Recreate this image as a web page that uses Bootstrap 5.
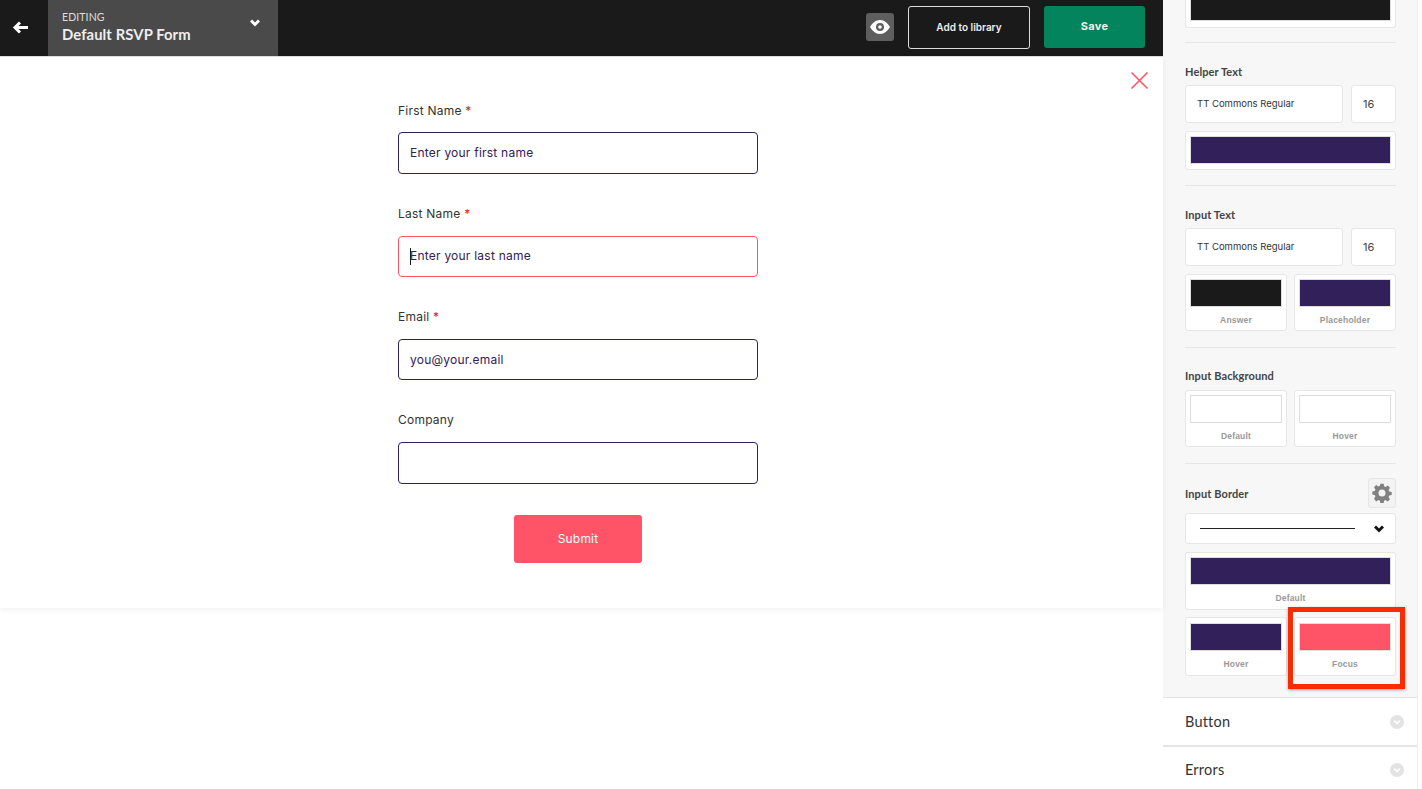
<!DOCTYPE html>
<html lang="en"><head><meta charset="utf-8"><title>Default RSVP Form</title>
<link href="https://cdn.jsdelivr.net/npm/bootstrap@5.3.0/dist/css/bootstrap.min.css" rel="stylesheet">
<style>
html,body{height:789px;overflow:hidden;background:#fff}
body{font-family:"Lato",sans-serif;color:#333}
.app-shell{height:789px;position:relative}
.main-col{width:1163px}
.top-bar{height:56px;background:#1a1a1a;border-bottom:1px solid #ddd;box-sizing:content-box;margin-bottom:-1px}
.back-cell{width:48px;padding-left:12px;padding-bottom:1px}
.title-cell{width:230px;background:#4a4a4a;padding:0 18px 2px 14px;color:#fff}
.edit-small{font-size:10.5px;line-height:12px;color:#ddd;letter-spacing:.1px}
.edit-big{font-size:14.8px;font-weight:700;line-height:20px;color:#eee;margin-top:1px;letter-spacing:.1px}
.top-actions{padding-bottom:2px}
.eye-btn{width:28px;height:28px;background:#5e5e5e;border-radius:3px;margin-right:14px}
.lib-btn{width:122px;height:43px;border:1px solid #ddd;border-radius:3px;color:#eee;font:600 10px "Inter",sans-serif;background:transparent;padding:0;margin-right:14px}
.save-btn{width:101px;height:42px;background:#04845c;border:0;border-radius:3px;color:#eee;font:700 11px "Inter",sans-serif;padding:0 0 3px;margin-right:18px;letter-spacing:.3px}
.form-zone{height:552px;position:relative;box-shadow:0 2px 6px rgba(0,0,0,.06);padding:46px 0 0 398px;font-family:"Inter",sans-serif}
.x-close{position:absolute;left:1130px;top:15px}
.field-block{width:360px;height:103px}
.field-label{font-size:12px;line-height:18px;color:#333;letter-spacing:.23px;margin-bottom:13px;height:18px}
.field-block:first-of-type .field-label{margin-bottom:12px}
.req{color:#e0200c}
.field-input{height:41px;border:1px solid #32205a;border-radius:4px;font-size:12px;line-height:39px;padding-left:11px;color:#32205a;letter-spacing:.23px;position:relative}
.field-input.tall-input{height:42px;line-height:40px}
.field-input.focused{border-color:#ff5468;line-height:37px}
.caret-mark{position:absolute;left:11px;top:11px;width:1px;height:17px;background:#1a1a1a}
.submit-wrap{width:360px;margin-top:1px;display:flex;justify-content:center}
.submit-btn{width:128px;height:48px;background:#ff5468;border:0;border-radius:3px;color:#fff;font-size:12px;padding:0;letter-spacing:.2px}
.side-col{width:255px;height:789px;background:#f7f7f7;border-right:1px solid #eee;overflow:hidden}
.side-pad{padding:0 21px 0 22px;height:697px}
.s-box{background:#fff;border:1px solid #e6e6e6;border-radius:3px}
.s-label{font-size:11px;font-weight:700;color:#444;line-height:14px;letter-spacing:.1px}
.s-rule{height:1px;background:#e6e6e6}
.swatch{height:28px;margin:4px 4px 0;border:1px solid #ddd}
.swatch.low-swatch{margin-top:5px}
.sw-dark{background:#1a1a1a}
.sw-purple{background:#32205a}
.sw-white{background:#fff}
.sw-pink{background:#ff5468}
.sw-cap{font:700 8.5px/12px "Liberation Sans",sans-serif;color:#999;text-align:center;margin-top:7px;letter-spacing:.2px}
.font-row{height:38px;display:flex;gap:8px}
.font-name{width:158px;font:400 9.5px/35px "Inter",sans-serif;padding-left:11px;color:#333}
.font-size-box{width:45px;font:400 11px/36px "Inter",sans-serif;padding-left:11px;color:#444}
.pair-row{display:flex;gap:7px}
.pair-row .s-box{width:102px}
.gear-btn{width:28px;height:30px;background:#f3f3f3;border:1px solid #e6e6e6;border-radius:3px}
.line-select{height:31px;padding:0 11px 0 14px}
.line-sample{width:155px;height:1px;background:#222}
.acc-row{height:48px;background:#fff;border-top:1px solid #e4e4e4;padding:1px 13px 0 22px;font-size:14.5px;color:#333;letter-spacing:.2px}
.acc-row.second{border-top:2px solid #e4e4e4;padding-top:0;padding-bottom:0}
.acc-dot{width:14px;height:14px;border-radius:50%;background:#e3e3e3}
.highlight-box{position:absolute;left:1288px;top:607px;width:117px;height:82px;border:5px solid #f92b00;box-shadow:0 1px 3px rgba(0,0,0,.35)}
</style></head><body>
<div class="app-shell d-flex">
  <div class="main-col d-flex flex-column">
    <div class="top-bar d-flex align-items-stretch">
      <div class="back-cell d-flex align-items-center">
        <svg width="16" height="13" viewBox="0 0 16 13" fill="none" stroke="#fff" stroke-width="3"><path d="M16 6.500H3M8 1.500 3 6.500 8 11.500"/></svg>
      </div>
      <div class="title-cell d-flex align-items-center justify-content-between">
        <div><div class="edit-small">EDITING</div><div class="edit-big">Default RSVP Form</div></div>
        <svg class="mb-2" width="10" height="8" viewBox="0 0 10 8" fill="none" stroke="#fff" stroke-width="3"><path d="M1 1.500 5 5.500 9 1.500"/></svg>
      </div>
      <div class="top-actions flex-grow-1 d-flex align-items-center justify-content-end">
        <div class="eye-btn d-flex align-items-center justify-content-center">
          <svg width="20" height="14" viewBox="0 0 20 14"><path fill="#fff" fill-rule="evenodd" d="M10 0c4.500 0 8 3.500 10 7-2 3.500-5.500 7-10 7S2 10.500 0 7c2-3.500 5.500-7 10-7Zm0 3a4 4 0 1 0 0 8 4 4 0 0 0 0-8Zm0 2.200a1.800 1.800 0 1 1 0 3.600 1.800 1.800 0 0 1 0-3.600Z"/></svg>
        </div>
        <button class="btn lib-btn">Add to library</button>
        <button class="btn save-btn">Save</button>
      </div>
    </div>
    <div class="form-zone">
      <svg class="x-close" width="19" height="19" viewBox="0 0 19 19" stroke="#ff5468" stroke-width="1.6"><path d="M1.500 1.500 17.500 17.500M17.500 1.500 1.500 17.500"/></svg>
      <div class="field-block"><div class="field-label">First Name <span class="req">*</span></div><div class="field-input tall-input">Enter your first name</div></div>
      <div class="field-block"><div class="field-label">Last Name <span class="req">*</span></div><div class="field-input focused"><span class="caret-mark"></span>Enter your last name</div></div>
      <div class="field-block"><div class="field-label">Email <span class="req">*</span></div><div class="field-input">you@your.email</div></div>
      <div class="field-block"><div class="field-label">Company</div><div class="field-input tall-input"></div></div>
      <div class="submit-wrap"><button class="btn submit-btn">Submit</button></div>
    </div>
  </div>
  <div class="side-col">
    <div class="side-pad">
      <div class="s-box border-top-0 rounded-top-0" style="height:28px"><div class="swatch sw-dark mt-0" style="height:21px;border-top:0"></div></div>
      <div class="s-rule" style="margin-top:14px"></div>
      <div class="s-label" style="margin-top:22px">Helper Text</div>
      <div class="font-row" style="margin-top:6px"><div class="s-box font-name">TT Commons Regular</div><div class="s-box font-size-box">16</div></div>
      <div class="s-box mt-2" style="height:39px"><div class="swatch sw-purple"></div></div>
      <div class="s-rule" style="margin-top:15px"></div>
      <div class="s-label" style="margin-top:22px">Input Text</div>
      <div class="font-row" style="margin-top:6px"><div class="s-box font-name">TT Commons Regular</div><div class="s-box font-size-box">16</div></div>
      <div class="pair-row mt-2">
        <div class="s-box" style="height:57px"><div class="swatch sw-dark"></div><div class="sw-cap">Answer</div></div>
        <div class="s-box" style="height:57px"><div class="swatch sw-purple"></div><div class="sw-cap">Placeholder</div></div>
      </div>
      <div class="s-rule" style="margin-top:16px"></div>
      <div class="s-label" style="margin-top:21px">Input Background</div>
      <div class="pair-row" style="margin-top:7px">
        <div class="s-box" style="height:57px"><div class="swatch sw-white"></div><div class="sw-cap">Default</div></div>
        <div class="s-box" style="height:57px"><div class="swatch sw-white"></div><div class="sw-cap">Hover</div></div>
      </div>
      <div class="s-rule" style="margin-top:16px"></div>
      <div class="d-flex align-items-center justify-content-between" style="margin-top:14px;height:30px">
        <div class="s-label" style="margin-top:2px">Input Border</div>
        <div class="gear-btn d-flex align-items-center justify-content-center">
          <svg width="20" height="20" viewBox="0 0 20 20"><path fill="#808080" fill-rule="evenodd" d="M8.400.8h3.200l.5 2.500 1.500.6 2.200-1.400 2.200 2.200-1.400 2.200.6 1.500 2.500.5v3.200l-2.500.5-.6 1.500 1.400 2.200-2.200 2.200-2.200-1.400-1.500.6-.5 2.500H8.400l-.5-2.500-1.500-.6-2.200 1.400L2 15.800l1.400-2.200-.6-1.500-2.500-.5V8.400l2.500-.5.600-1.500L2 4.200 4.200 2l2.200 1.400 1.500-.6ZM10 6.500a3.500 3.500 0 1 0 0 7 3.500 3.500 0 0 0 0-7Z"/></svg>
        </div>
      </div>
      <div class="s-box line-select d-flex align-items-center justify-content-between" style="margin-top:5px">
        <div class="line-sample"></div>
        <svg width="10" height="8" viewBox="0 0 10 8" fill="none" stroke="#111" stroke-width="3"><path d="M1 1.500 5 5.500 9 1.500"/></svg>
      </div>
      <div class="s-box" style="height:58px;margin-top:8px"><div class="swatch sw-purple"></div><div class="sw-cap">Default</div></div>
      <div class="pair-row" style="margin-top:7px">
        <div class="s-box" style="height:59px"><div class="swatch low-swatch sw-purple"></div><div class="sw-cap">Hover</div></div>
        <div class="s-box" style="height:59px"><div class="swatch low-swatch sw-pink"></div><div class="sw-cap">Focus</div></div>
      </div>
    </div>
    <div class="acc-row d-flex align-items-center justify-content-between">Button<span class="acc-dot d-flex align-items-center justify-content-center"><svg width="8" height="6" viewBox="0 0 8 6" fill="none" stroke="#fff" stroke-width="1.600"><path d="M1 1.500 4 4.500 7 1.500"/></svg></span></div>
    <div class="acc-row second d-flex align-items-center justify-content-between">Errors<span class="acc-dot d-flex align-items-center justify-content-center"><svg width="8" height="6" viewBox="0 0 8 6" fill="none" stroke="#fff" stroke-width="1.600"><path d="M1 1.500 4 4.500 7 1.500"/></svg></span></div>
  </div>
  <div class="highlight-box"></div>
</div>
<script src="https://cdn.jsdelivr.net/npm/bootstrap@5.3.0/dist/js/bootstrap.bundle.min.js"></script>
</body></html>
